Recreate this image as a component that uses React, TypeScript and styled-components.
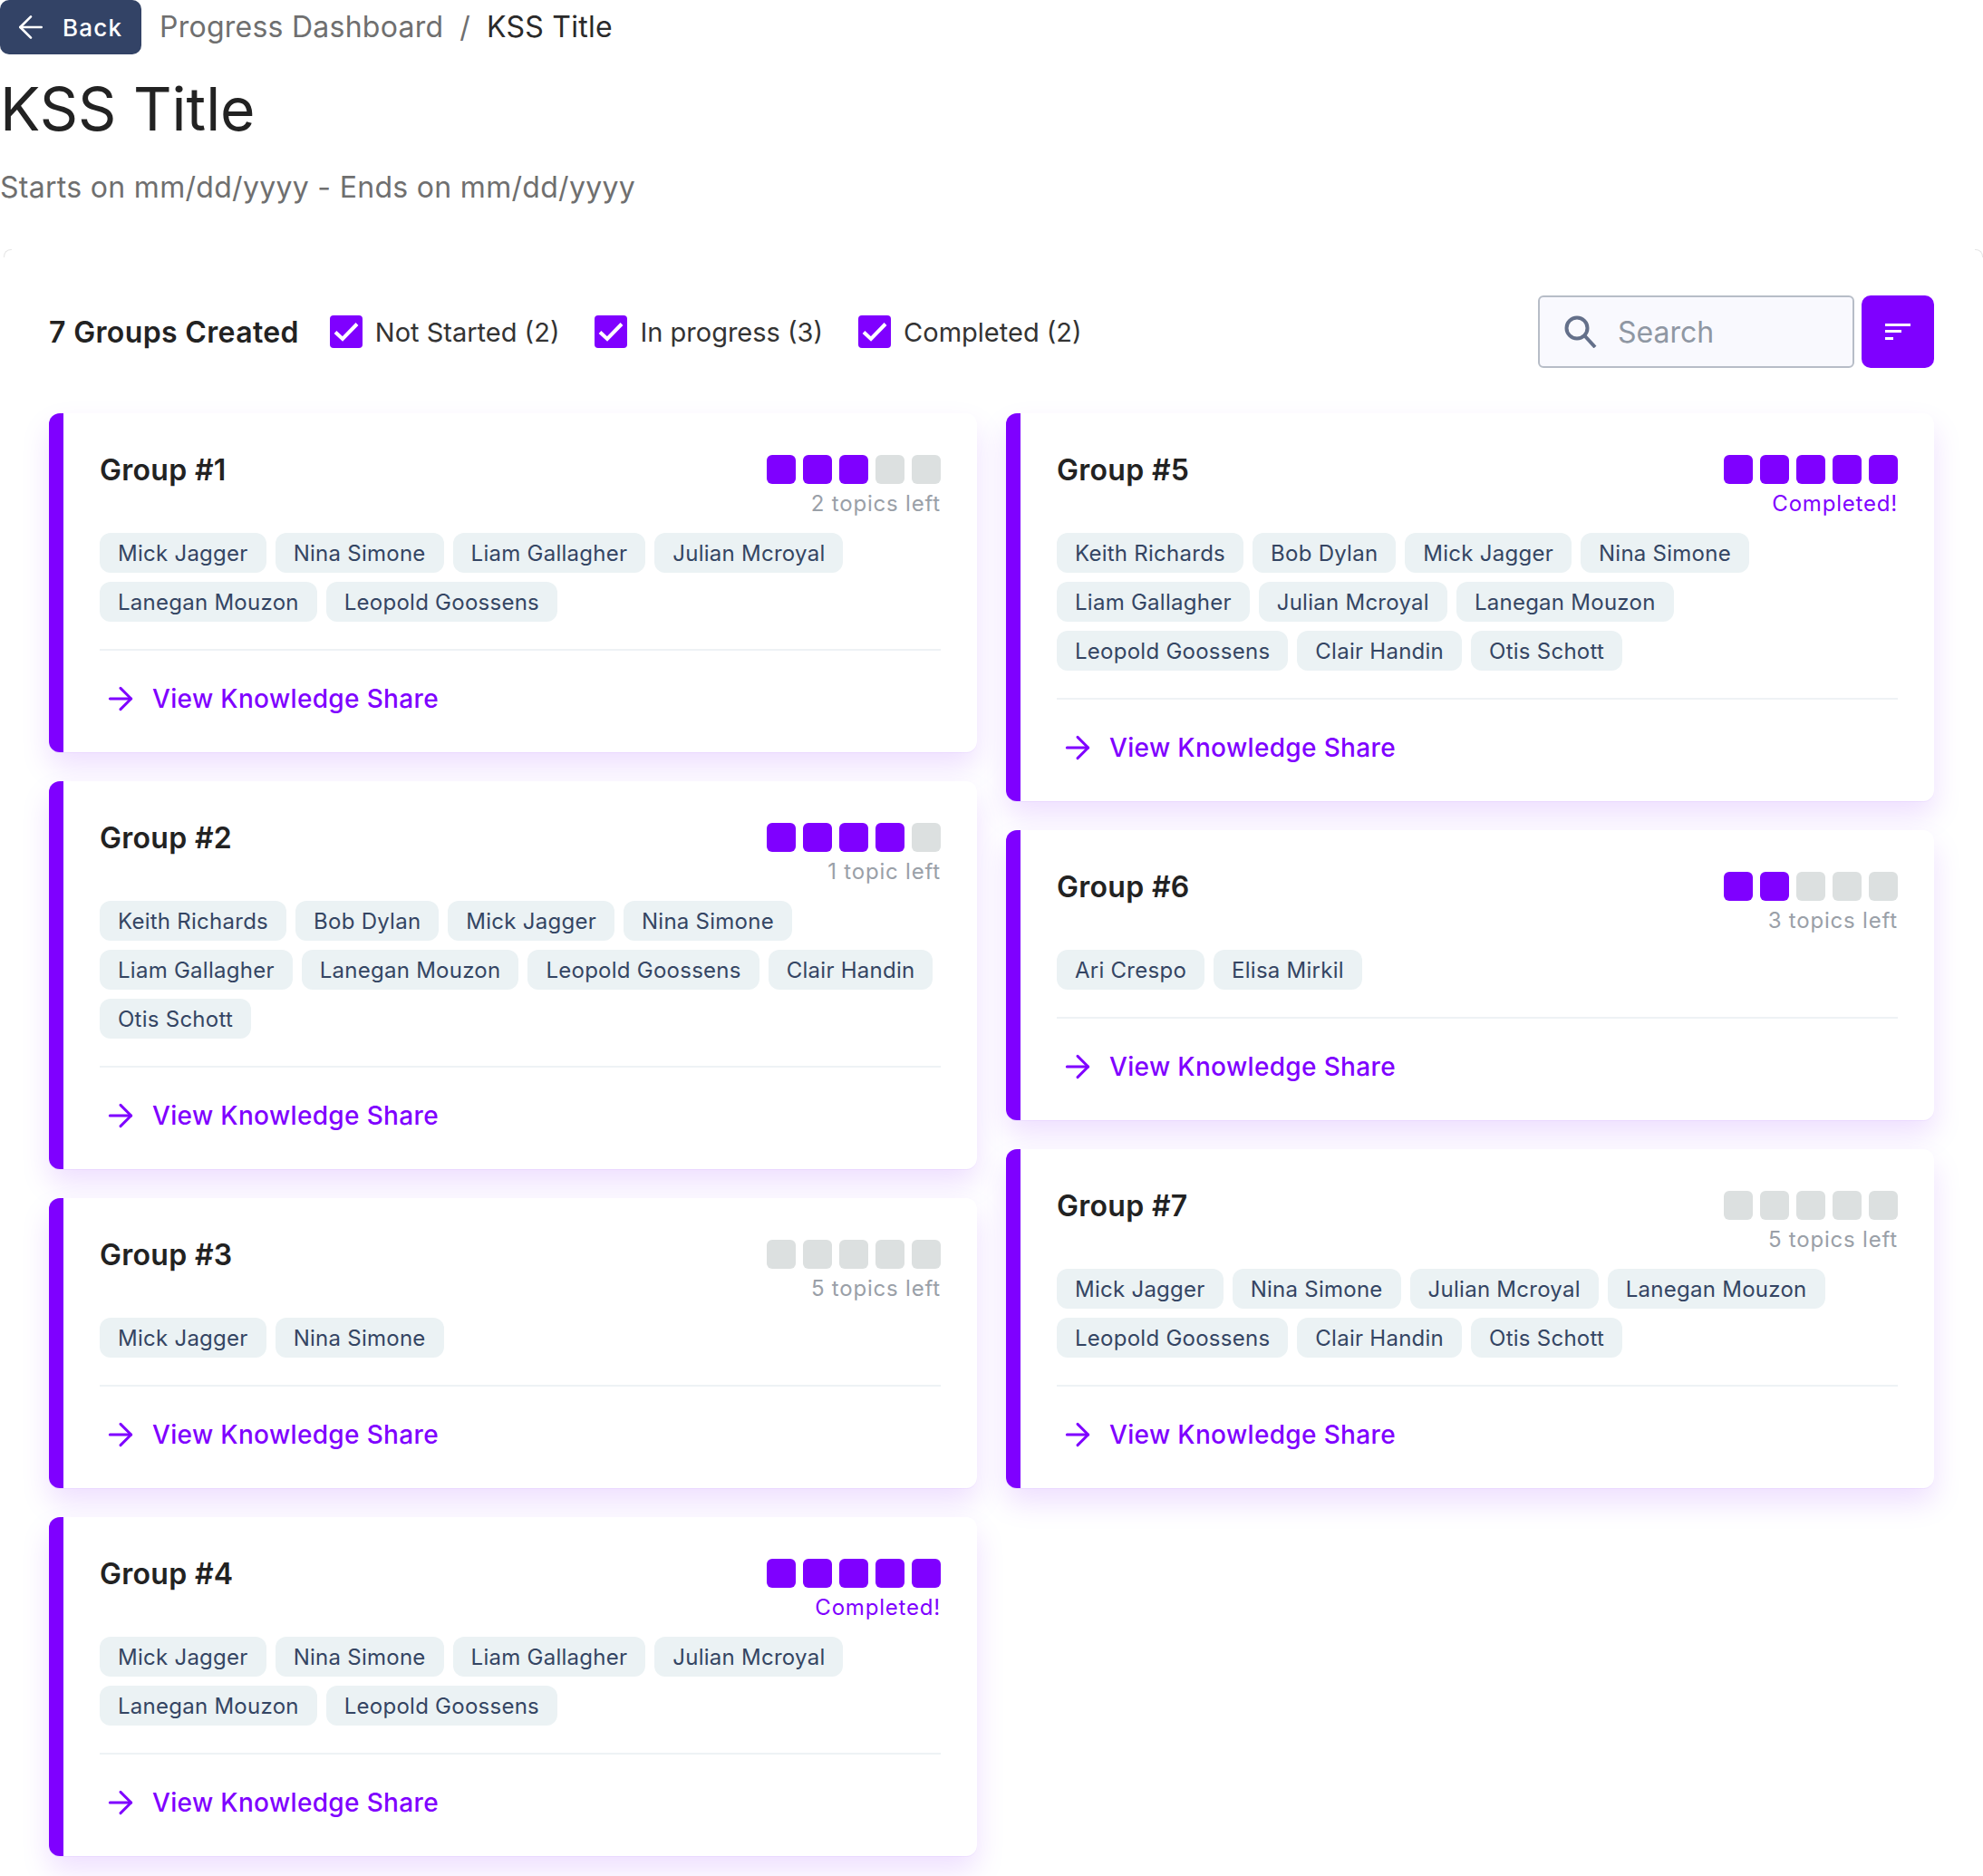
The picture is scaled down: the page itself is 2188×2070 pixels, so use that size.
import React from "react";
import styled, { createGlobalStyle } from "styled-components";
import { ArrowLeft, ArrowRight } from "lucide-react";

// Types
interface Group {
  name: string;
  done: number;
  members: string[];
}

// Data
const leftGroups: Group[] = [
  {
    name: "Group #1",
    done: 3,
    members: ["Mick Jagger", "Nina Simone", "Liam Gallagher", "Julian Mcroyal", "Lanegan Mouzon", "Leopold Goossens"],
  },
  {
    name: "Group #2",
    done: 4,
    members: ["Keith Richards", "Bob Dylan", "Mick Jagger", "Nina Simone", "Liam Gallagher", "Lanegan Mouzon", "Leopold Goossens", "Clair Handin", "Otis Schott"],
  },
  { name: "Group #3", done: 0, members: ["Mick Jagger", "Nina Simone"] },
  {
    name: "Group #4",
    done: 5,
    members: ["Mick Jagger", "Nina Simone", "Liam Gallagher", "Julian Mcroyal", "Lanegan Mouzon", "Leopold Goossens"],
  },
];

const rightGroups: Group[] = [
  {
    name: "Group #5",
    done: 5,
    members: ["Keith Richards", "Bob Dylan", "Mick Jagger", "Nina Simone", "Liam Gallagher", "Julian Mcroyal", "Lanegan Mouzon", "Leopold Goossens", "Clair Handin", "Otis Schott"],
  },
  { name: "Group #6", done: 2, members: ["Ari Crespo", "Elisa Mirkil"] },
  {
    name: "Group #7",
    done: 0,
    members: ["Mick Jagger", "Nina Simone", "Julian Mcroyal", "Lanegan Mouzon", "Leopold Goossens", "Clair Handin", "Otis Schott"],
  },
];

const filters = ["Not Started (2)", "In progress (3)", "Completed (2)"];

const PURPLE = "#7f00ff";

// Styles
const GlobalStyle = createGlobalStyle`
  html, body {
    margin: 0;
    padding: 0;
    background: #fff;
    font-family: Inter, "Liberation Sans", sans-serif;
  }
  * {
    box-sizing: border-box;
  }
`;

const Page = styled.div`
  width: 2188px;
  height: 2070px;
  overflow: hidden;
`;

const Breadcrumbs = styled.div`
  display: flex;
  align-items: flex-start;
  height: 60px;
`;

const BackButton = styled.button`
  width: 156px;
  height: 60px;
  display: flex;
  align-items: center;
  gap: 15px;
  padding: 0 0 0 14px;
  border: 0;
  border-radius: 10px;
  background: #334366;
  color: #fff;
  font: 500 26px Inter, sans-serif;
  letter-spacing: 1.2px;
`;

const Crumb = styled.span<{ $current?: boolean }>`
  font-size: 32px;
  line-height: 60px;
  letter-spacing: 0.25px;
  color: ${(p) => (p.$current ? "#2a2a2a" : "#6f6f6f")};
`;

const CrumbPath = styled.div`
  display: flex;
  gap: 18px;
  margin-left: 20px;
`;

const Title = styled.h1`
  margin: 25px 0 0;
  font-size: 66px;
  line-height: 70px;
  font-weight: 400;
  color: #222;
`;

const Dates = styled.p`
  margin: 32px 0 0;
  font-size: 32px;
  line-height: 40px;
  letter-spacing: 0.3px;
  color: #6f6f6f;
`;

const Panel = styled.section`
  position: relative;
  margin-top: 48px;
  padding: 51px 50px 0 54px;
  border-radius: 12px;
  background: #fff;

  &::before,
  &::after {
    content: "";
    position: absolute;
    top: 0;
    width: 8px;
    height: 8px;
    border-top: 1px solid #e6e6e6;
  }

  &::before {
    left: 4px;
    border-left: 1px solid #e6e6e6;
    border-top-left-radius: 8px;
  }

  &::after {
    right: 0;
    border-right: 1px solid #e6e6e6;
    border-top-right-radius: 8px;
  }
`;

const Toolbar = styled.div`
  display: flex;
  align-items: center;
  height: 80px;
  padding-right: 4px;
`;

const Count = styled.strong`
  font-size: 32px;
  font-weight: 600;
  letter-spacing: 0.35px;
  color: #222;
  margin-right: 34px;
`;

const FilterLabel = styled.label`
  display: flex;
  align-items: center;
  gap: 14px;
  margin-right: 39px;
  font-size: 29px;
  color: #333;
`;

const CheckBox = styled.span`
  width: 36px;
  height: 36px;
  display: flex;
  border-radius: 4px;
  background: ${PURPLE};
`;

const SearchBox = styled.div`
  margin-left: auto;
  width: 349px;
  height: 80px;
  display: flex;
  align-items: center;
  gap: 23px;
  padding-left: 27px;
  border: 2px solid #b7bdc7;
  border-radius: 6px;
  background: #f9f9fe;
  font-size: 32px;
  color: #8f97a3;
`;

const FilterButton = styled.button`
  width: 80px;
  height: 80px;
  margin-left: 8px;
  display: flex;
  align-items: center;
  justify-content: center;
  border: 0;
  border-radius: 10px;
  background: ${PURPLE};
`;

const Columns = styled.div`
  display: flex;
  gap: 32px;
  margin-top: 50px;
`;

const Column = styled.div`
  width: 1024px;
  display: flex;
  flex-direction: column;
  gap: 32px;
`;

const Card = styled.article`
  padding: 0 40px;
  border-left: 16px solid ${PURPLE};
  border-radius: 12px;
  background: #fff;
  box-shadow: 0 16px 32px rgba(127, 0, 255, 0.13), 0 1px 0 rgba(127, 0, 255, 0.05);
`;

const CardHeader = styled.div`
  height: 132px;
  padding-top: 46px;
  display: flex;
  justify-content: space-between;
  align-items: flex-start;
`;

const CardTitle = styled.h2`
  margin: -3px 0 0;
  font-size: 32px;
  line-height: 40px;
  font-weight: 600;
  letter-spacing: 0.3px;
  color: #222;
`;

const Progress = styled.div`
  display: flex;
  flex-direction: column;
  align-items: flex-end;
`;

const Squares = styled.div`
  display: flex;
  gap: 8px;
`;

const Square = styled.span<{ $on: boolean }>`
  width: 32px;
  height: 32px;
  border-radius: 6px;
  background: ${(p) => (p.$on ? PURPLE : "#dce0e0")};
`;

const Status = styled.span<{ $done: boolean }>`
  margin-top: 6px;
  font-size: 24px;
  line-height: 32px;
  letter-spacing: 0.8px;
  color: ${(p) => (p.$done ? PURPLE : "#9aa0a8")};
`;

const Tags = styled.div`
  display: flex;
  flex-wrap: wrap;
  gap: 10px;
  padding-bottom: 30px;
  border-bottom: 2px solid #eef2f5;
`;

const Tag = styled.span`
  height: 44px;
  padding: 0 20px;
  display: flex;
  align-items: center;
  border-radius: 12px;
  background: #ebf2f4;
  font-size: 24px;
  letter-spacing: 0.26px;
  color: #344563;
`;

const CardLink = styled.a`
  height: 112px;
  padding: 0 0 6px 3px;
  display: flex;
  align-items: center;
  gap: 15px;
  font-size: 28px;
  font-weight: 500;
  letter-spacing: 0.35px;
  color: ${PURPLE};
`;

// Component
const GroupCard: React.FC<{ group: Group }> = ({ group }) => {
  const left = 5 - group.done;
  const status =
    left === 0 ? "Completed!" : `${left} ${left === 1 ? "topic" : "topics"} left`;

  return (
    <Card>
      <CardHeader>
        <CardTitle>{group.name}</CardTitle>
        <Progress>
          <Squares>
            {[0, 1, 2, 3, 4].map((i) => (
              <Square key={i} $on={i < group.done} />
            ))}
          </Squares>
          <Status $done={left === 0}>{status}</Status>
        </Progress>
      </CardHeader>
      <Tags>
        {group.members.map((member) => (
          <Tag key={member}>{member}</Tag>
        ))}
      </Tags>
      <CardLink>
        <ArrowRight size={40} strokeWidth={1.8} />
        View Knowledge Share
      </CardLink>
    </Card>
  );
};

const App: React.FC = () => (
  <Page>
    <GlobalStyle />
    <Breadcrumbs>
      <BackButton>
        <ArrowLeft size={40} strokeWidth={1.6} />
        Back
      </BackButton>
      <CrumbPath>
        <Crumb>Progress Dashboard</Crumb>
        <Crumb>/</Crumb>
        <Crumb $current>KSS Title</Crumb>
      </CrumbPath>
    </Breadcrumbs>
    <Title>KSS Title</Title>
    <Dates>Starts on mm/dd/yyyy - Ends on mm/dd/yyyy</Dates>
    <Panel>
      <Toolbar>
        <Count>7 Groups Created</Count>
        {filters.map((label) => (
          <FilterLabel key={label}>
            <CheckBox>
              <svg width="36" height="36" viewBox="0 0 36 36" fill="none">
                <path d="M6 18.5L14 26L30 9.5" stroke="#fff" strokeWidth="4" />
              </svg>
            </CheckBox>
            {label}
          </FilterLabel>
        ))}
        <SearchBox>
          <svg width="36" height="36" viewBox="0 0 36 36" fill="none" stroke="#64708a" strokeWidth="4">
            <circle cx="14" cy="14" r="11.5" />
            <path d="M22.5 22.5L34 35" />
          </svg>
          Search
        </SearchBox>
        <FilterButton>
          <svg width="28" height="18" viewBox="0 0 28 18" fill="#fff">
            <rect width="28" height="3" />
            <rect y="7" width="18" height="3" />
            <rect y="15" width="9" height="3" />
          </svg>
        </FilterButton>
      </Toolbar>
      <Columns>
        <Column>
          {leftGroups.map((group) => (
            <GroupCard key={group.name} group={group} />
          ))}
        </Column>
        <Column>
          {rightGroups.map((group) => (
            <GroupCard key={group.name} group={group} />
          ))}
        </Column>
      </Columns>
    </Panel>
  </Page>
);

export default App;
